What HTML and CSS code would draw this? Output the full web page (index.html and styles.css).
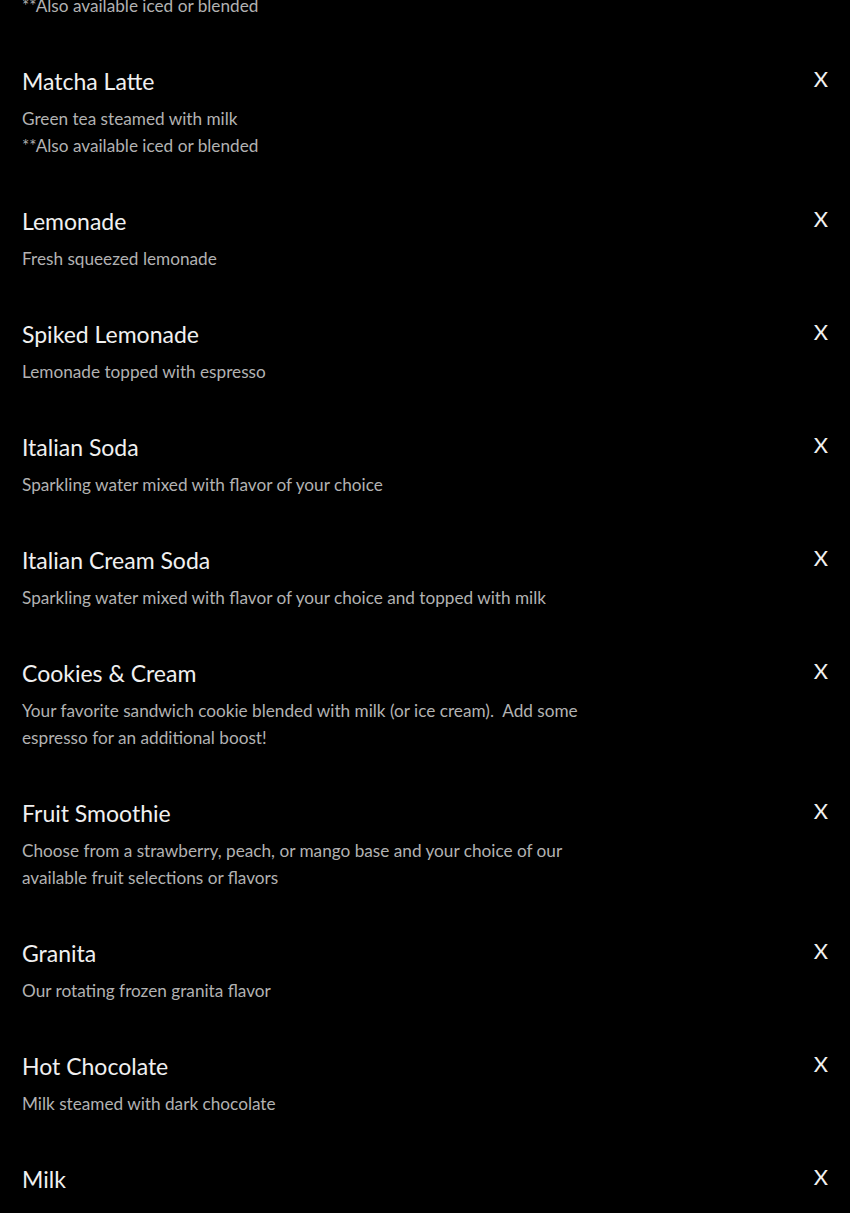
FILE: index.html
```html
<!DOCTYPE html>
<html lang="en">
<head>
<meta charset="utf-8">
<title>Menu</title>
<link rel="stylesheet" href="styles.css">
</head>
<body>
<main class="menu">
  <div class="item item-partial">
    <p class="desc">**Also available iced or blended</p>
  </div>
  <div class="item">
    <div class="head"><h2 class="title">Matcha Latte</h2><span class="x">X</span></div>
    <p class="desc">Green tea steamed with milk<br>**Also available iced or blended</p>
  </div>
  <div class="item">
    <div class="head"><h2 class="title">Lemonade</h2><span class="x">X</span></div>
    <p class="desc">Fresh squeezed lemonade</p>
  </div>
  <div class="item">
    <div class="head"><h2 class="title">Spiked Lemonade</h2><span class="x">X</span></div>
    <p class="desc">Lemonade topped with espresso</p>
  </div>
  <div class="item">
    <div class="head"><h2 class="title">Italian Soda</h2><span class="x">X</span></div>
    <p class="desc">Sparkling water mixed with flavor of your choice</p>
  </div>
  <div class="item">
    <div class="head"><h2 class="title">Italian Cream Soda</h2><span class="x">X</span></div>
    <p class="desc">Sparkling water mixed with flavor of your choice and topped with milk</p>
  </div>
  <div class="item">
    <div class="head"><h2 class="title">Cookies &amp; Cream</h2><span class="x">X</span></div>
    <p class="desc">Your favorite sandwich cookie blended with milk (or ice cream).&nbsp; Add some espresso for an additional boost!</p>
  </div>
  <div class="item">
    <div class="head"><h2 class="title">Fruit Smoothie</h2><span class="x">X</span></div>
    <p class="desc">Choose from a strawberry, peach, or mango base and your choice of our available fruit selections or flavors</p>
  </div>
  <div class="item">
    <div class="head"><h2 class="title">Granita</h2><span class="x">X</span></div>
    <p class="desc">Our rotating frozen granita flavor</p>
  </div>
  <div class="item">
    <div class="head"><h2 class="title">Hot Chocolate</h2><span class="x">X</span></div>
    <p class="desc">Milk steamed with dark chocolate</p>
  </div>
  <div class="item">
    <div class="head"><h2 class="title">Milk</h2><span class="x">X</span></div>
  </div>
</main>
</body>
</html>
```

FILE: styles.css
```css
html, body {
  margin: 0;
  padding: 0;
  background: #000;
}
body {
  font-family: Lato, "Open Sans", sans-serif;
  color: #eee;
  overflow: hidden;
  height: 1213px;
}
.menu {
  display: flex;
  flex-direction: column;
  gap: 47px;
  padding: 0 22px;
  margin-top: -8px;
}
.item {
  display: flex;
  flex-direction: column;
}
.head {
  display: flex;
  justify-content: space-between;
  align-items: center;
  height: 30px;
}
.title {
  margin: 0;
  font-size: 23px;
  font-weight: 400;
  line-height: 30px;
  color: #f0f0f0;
}
.x {
  font-size: 22px;
  line-height: 30px;
  color: #f0f0f0;
  margin-top: -4px;
}
.desc {
  margin: 9px 0 0;
  font-size: 17.2px;
  line-height: 27px;
  color: #b2b2b2;
  max-width: 590px;
}
.item-partial .desc {
  margin: 0;
}
```
